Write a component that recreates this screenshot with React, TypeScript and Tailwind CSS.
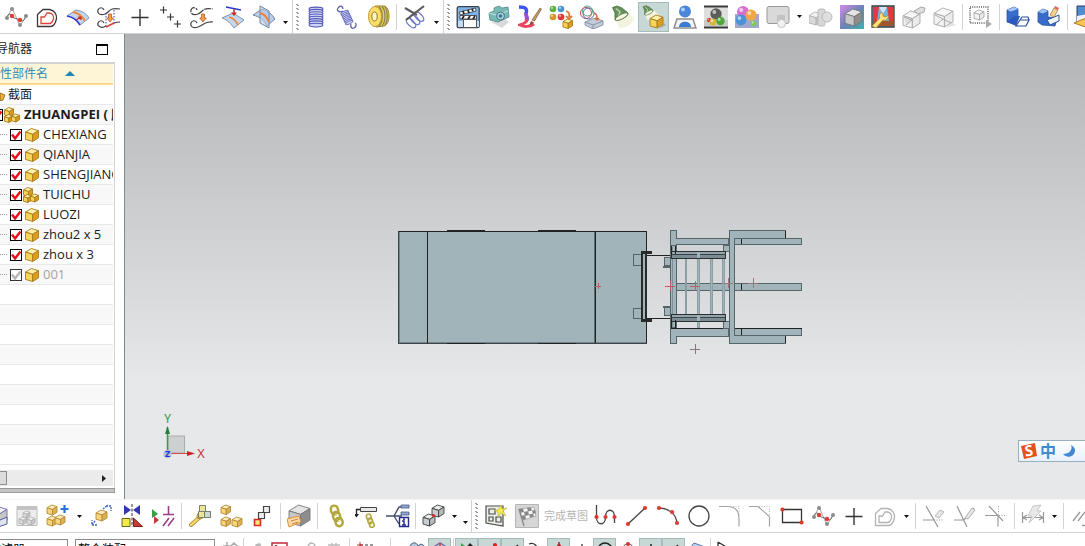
import type { ReactNode } from "react";
import clsx from "clsx";

type Palette = { top: string; left: string; right: string; line: string };

const gold: Palette = { top: "#fdf0a8", left: "#f8d558", right: "#dd9d1d", line: "#a87a1c" };
const amber: Palette = { top: "#fdedb9", left: "#f6d67c", right: "#deb052", line: "#b58a37" };
const grey: Palette = { top: "#f1f1f1", left: "#dadada", right: "#c6c6c6", line: "#b3b3b3" };
const steel: Palette = { top: "#e4e4e4", left: "#c6c6c6", right: "#8d8d8d", line: "#777777" };
const glass: Palette = { top: "#e8eaec", left: "#c9cdd0", right: "#b7bbbe", line: "#3c3c3c" };
const wire: Palette = { top: "#f8f8f8", left: "#f3f3f3", right: "#ebebeb", line: "#a8a8a8" };

function Cube({ x, y, s, p }: { x: number; y: number; s: number; p: Palette }) {
  const h = s * 0.28;
  const m = s * 0.55;
  return (
    <g transform={`translate(${x} ${y})`} stroke={p.line} strokeWidth=".9" strokeLinejoin="round">
      <path d={`M0 ${h} L${s - m} 0 L${s} ${h * 0.6} L${m} ${h * 1.6}Z`} fill={p.top} />
      <path d={`M0 ${h} L${m} ${h * 1.6} V${s} L0 ${s * 0.84}Z`} fill={p.left} />
      <path d={`M${m} ${h * 1.6} L${s} ${h * 0.6} V${s * 0.72} L${m} ${s}Z`} fill={p.right} />
    </g>
  );
}

function Icon({ children }: { children: ReactNode }) {
  return (
    <svg viewBox="0 0 24 24" fill="none" className="size-6 shrink-0" aria-hidden="true">
      {children}
    </svg>
  );
}

function Tool({ label, active, children }: { label: string; active?: boolean; children: ReactNode }) {
  return (
    <button
      type="button"
      aria-label={label}
      className={clsx(
        "flex h-[30px] w-[31px] shrink-0 items-center justify-center border",
        active ? "border-[#a5bcbb] bg-[#c8d8d6]" : "border-transparent",
      )}
    >
      <Icon>{children}</Icon>
    </button>
  );
}

function Caret({ className = "w-3", low }: { className?: string; low?: boolean }) {
  return (
    <button type="button" aria-label="More" className={clsx("flex h-[30px] shrink-0 items-center justify-center", className, low && "pt-3")}>
      <svg viewBox="0 0 5 3" className="h-[3px] w-[5px]" aria-hidden="true">
        <path d="M0 0h5L2.500 3z" fill="#111" />
      </svg>
    </button>
  );
}

function Sep({ className = "w-1.5" }: { className?: string }) {
  return (
    <span className={clsx("flex shrink-0 justify-center", className)}>
      <span className="h-[26px] w-px bg-[#d3d3d3]" />
    </span>
  );
}

function Grip({ className }: { className: string }) {
  return (
    <span className={clsx("flex h-full shrink-0 items-center justify-between border-l border-[#d0d0d0]", className)}>
      <svg viewBox="0 0 4 26" className="ml-[3px] h-[26px] w-1" aria-hidden="true">
        {[0, 4, 8, 12, 16, 20, 24].map((y) => (
          <path key={y} d={`M0 ${y}h2v1h1v1h-2v-1h-1z`} fill="#9d9d9d" />
        ))}
      </svg>
    </span>
  );
}

/* ---------- shared drawings ---------- */

function Spline() {
  return (
    <>
      <path d="M3 13 8 3l8 18 6-10" stroke="#a8a8a8" />
      <path d="M3 13c1-5 3-5 5-2s4 2 8 4 4 0 6-4" stroke="#5d5d5d" />
      {["3 13", "8 4", "16 20", "22 11"].map((p) => (
        <circle key={p} cx={p.split(" ")[0]} cy={p.split(" ")[1]} r="2" fill="#8c8c8c" />
      ))}
      <circle cx="8" cy="11" r="2.200" fill="#df3b2e" />
      <circle cx="16" cy="15" r="2.200" fill="#df3b2e" />
    </>
  );
}

function Contour({ outer, inner }: { outer: string; inner: string }) {
  return (
    <>
      <path d="M2.500 21.500V9.500L8 4.500h6.500c5 1 7.500 5 7 9-1 5-3 8-6 8z" stroke={outer} strokeWidth="1.300" />
      <path d="M6 18.500V12h3.500L12 8h2.500c3 .5 4.500 3 4 6-1 3-2 4.500-4 4.500z" stroke={inner} strokeWidth="1.300" />
    </>
  );
}

function Coil({ n = 8 }: { n?: number }) {
  return (
    <>
      {Array.from({ length: n }, (_, i) => (
        <ellipse key={i} cx="12" cy={4 + i * 2.3} rx="7" ry="1.900" stroke="#4f57b8" strokeWidth="1.100" fill="#cfd4f1" />
      ))}
    </>
  );
}

function Lamp() {
  return (
    <>
      <path d="m5 15 12-7 6 5c0 5-7 10-15 10z" fill="#f3f3e0" />
      <path d="M1.500 2.500 6 1l5 2 6 5c1 3-8 8-13 7L4 8z" fill="#67925a" stroke="#446a39" strokeWidth=".8" />
      <path d="M5 3.500 9 7l-2 5" stroke="#bcd6b0" strokeWidth="1.500" />
      <ellipse cx="10.500" cy="11.700" rx="7" ry="2.300" transform="rotate(-28 10.500 11.700)" fill="#f6f8de" stroke="#56784b" strokeWidth=".8" />
    </>
  );
}

function Chain() {
  return (
    <g stroke="#b2a73c" strokeWidth="2.400">
      <rect x="7" y="1.500" width="7" height="9" rx="3.500" transform="rotate(-15 11 6)" />
      <rect x="9" y="8" width="7" height="9" rx="3.500" transform="rotate(-15 12 12)" />
      <rect x="11.500" y="14" width="7" height="8.500" rx="3.500" transform="rotate(-15 14 18)" />
      <path d="m8 4 3-1M11 11l3-1M14 17l3-1" stroke="#f1eb9b" strokeWidth="1" />
    </g>
  );
}

function Plus() {
  return <path d="M12 4v17M3.500 12.500h17" stroke="#333" strokeWidth="1.400" />;
}

function DownArrow({ x, y }: { x: number; y: number }) {
  return (
    <path transform={`translate(${x} ${y})`} d="M-1.500 0h3v4h1.800L0 8l-3.300-4h1.800z" fill="#f2a23c" stroke="#b3482c" strokeWidth=".7" />
  );
}

function Ball({ cx, cy, r, fill }: { cx: number; cy: number; r: number; fill: string }) {
  return (
    <>
      <circle cx={cx} cy={cy} r={r} fill={fill} />
      <circle cx={cx - r * 0.3} cy={cy - r * 0.35} r={r * 0.35} fill="#fff" opacity=".6" />
    </>
  );
}

function Dots({ points }: { points: [number, number][] }) {
  return (
    <>
      {points.map(([x, y]) => (
        <circle key={`${x}-${y}`} cx={x} cy={y} r="2.100" fill="#dd3a2d" />
      ))}
    </>
  );
}

/* ---------- top toolbar ---------- */

function TopToolbar() {
  return (
    <div role="toolbar" aria-label="Curves and display" className="flex h-[34px] shrink-0 items-center overflow-hidden border-b border-[#cfd2d3] bg-white">
      <Tool label="Studio spline"><Spline /></Tool>
      <Tool label="Offset curve"><Contour outer="#3a3a3a" inner="#dc4438" /></Tool>
      <Tool label="Offset in face">
        <path d="M1 11 10 5c6 1 10 3 13 8l-9 7C11 15 7 12 1 11z" fill="#c3d6ef" stroke="#7d94b5" />
        <path d="M1 11c6 1 10 4 13 9" stroke="#2b36dc" strokeWidth="1.600" />
        <path d="M7 7c6 1 9 4 12 9" stroke="#f08a3c" strokeWidth="2" />
        <path d="m10 15 5-3m-3 0h3v3" stroke="#c22c22" strokeWidth="1.200" />
      </Tool>
      <Tool label="Bridge curve">
        <path d="M8 9C3 11 0 8 1 5s5-3 6 0M8 9c5-2 4-7 15-5M9 21C4 24 0 21 1 18s5-3 6 0M16 19c2-2 4-2 7-2" stroke="#444" strokeWidth="1.200" />
        <path d="M9 22 17 18" stroke="#e33a30" strokeWidth="1.500" />
        <path d="M9 8v13M17 5v13" stroke="#3c3cc8" strokeDasharray="1.500 1.500" />
        <DownArrow x={13} y={9} />
      </Tool>
      <Tool label="Point"><Plus /></Tool>
      <Tool label="Point set">
        <path d="M4.500 1.500v7M1 5h7M11.500 8.500v7M8 12h7M18.500 15.500v7M15 19h7" stroke="#333" strokeWidth="1.200" />
      </Tool>
      <Tool label="Project curve">
        <path d="M8 9C3 11 0 8 1 5s5-3 6 0M8 9c5-2 4-7 15-5" stroke="#444" strokeWidth="1.200" strokeDasharray="7 1" />
        <path d="M8 22C3 24 0 21 1 18s5-3 6 0M8 22c6-2 6-6 15-5" stroke="#444" strokeWidth="1.200" />
        <DownArrow x={13} y={9} />
      </Tool>
      <Tool label="Combined projection">
        <path d="m1 13 11-5c4 2 7 5 11 7l-10 8C10 19 7 15 1 13z" fill="#c5d7ec" stroke="#7f94ae" />
        <path d="m5 2 15 3" stroke="#2b3ad4" strokeWidth="1.600" />
        <path d="M8 12c4 1 7 4 9 8" stroke="#ee8036" strokeWidth="1.600" />
        <path d="M13 4v5" stroke="#c92b27" strokeWidth="1.500" />
        <path d="M10 7.500h6L13 11z" fill="#c92b27" />
      </Tool>
      <Tool label="Intersection curve">
        <path d="m1 10 9-6c6 2 10 5 13 10l-8 7C12 15 8 12 1 10z" fill="#b9cfe9" stroke="#7187a6" />
        <path d="m8 1 9 5v17l-9-5z" fill="#b9cae0" fillOpacity=".6" stroke="#7187a6" />
        <path d="M8 8c4 1 7 4 9 9" stroke="#ee8036" strokeWidth="2" />
      </Tool>
      <Caret className="w-[13px]" low />

      <Grip className="w-2" />
      <Tool label="Cylindrical spring"><Coil /></Tool>
      <Tool label="Tension spring">
        <g transform="rotate(-25 12 12) translate(4.500 4) scale(.6 .7)"><Coil n={8} /></g>
        <path d="M8 6C5 8 1 6 3 3s5-2 5 1M16 19c-1 3 1 5 3 4s3-4 1-5" stroke="#5a5fae" strokeWidth="1.300" />
      </Tool>
      <Tool label="Pulley">
        <path d="M9 1h9c3 0 5 5 5 10s-2 9-5 10l-8 1z" fill="#eccd4d" stroke="#9b812c" />
        <path d="M12.500 1.500c5 4 5 16 0 20M16 1.500c4 4 4 15 0 19.500M19 2c3 4 3 14 0 18" stroke="#80835c" strokeWidth="1.200" />
        <ellipse cx="9" cy="11.500" rx="6.500" ry="10" fill="#f9df68" stroke="#c39a2f" />
        <ellipse cx="8.500" cy="11.500" rx="2.700" ry="4.500" fill="#fff5bd" stroke="#8e7326" />
      </Tool>
      <Sep />
      <Tool label="Delete spring">
        {[0, 4, 8].map((d) => (
          <ellipse key={d} cx={8 + d} cy={18 - d * 0.8} rx="3" ry="6" transform={`rotate(-45 ${8 + d} ${18 - d * 0.8})`} stroke="#6f7acb" strokeWidth="1.400" />
        ))}
        <path d="m2 3 12 7M3 15 21 1" stroke="#5d5d5d" strokeWidth="2.200" />
      </Tool>
      <Caret className="w-[13px]" low />

      <Grip className="w-[9px]" />
      <Tool label="Animation">
        <rect x="1.200" y="1.700" width="22" height="21" rx="1.500" fill="#7fb4e6" stroke="#39424e" strokeWidth="1.300" />
        <path d="M2 16h21v6H2z" fill="#c3dcf4" />
        <path d="m3.500 7 16-4 .5 3L4 10z" fill="#fff" stroke="#333" strokeWidth=".8" />
        <path d="m7 6 1 3m4-4 1 3m3-4 1 2" stroke="#222" strokeWidth="1.800" />
        <path d="M4 10.500h16.500V14H4z" fill="#fff" stroke="#333" strokeWidth=".8" />
        <path d="m6 14 2-3m4 3 2-3m3 3 2-3" stroke="#222" strokeWidth="1.800" />
        <path d="M7.500 14.500h13v8h-13z" fill="#fbfbfb" stroke="#555" />
      </Tool>
      <Tool label="Capture view">
        <path d="m4 17 11 6 7-6-4-3z" fill="#dadada" />
        <path d="m2 8 5-2V3l5-2 3 2 6-1 1 10-11 5-8-2z" fill="#77b9b5" stroke="#4b8683" strokeWidth=".8" />
        <path d="m2 8 7 2 12-4" stroke="#c6e6e3" />
        <circle cx="13.500" cy="11" r="4" fill="#a7d3dd" stroke="#41768a" />
        <circle cx="13.500" cy="11" r="1.800" fill="#3c6e91" />
      </Tool>
      <Tool label="Edit object display">
        <path d="M1 2c9 0 8 4 7 7" stroke="#3e55ee" strokeWidth="3.500" />
        <path d="M8 8c-1 3 3 5 0 8" stroke="#9a4fd0" strokeWidth="4" />
        <path d="M9 14c0 4-4 5-7 6 4 2 10 2 14-1" stroke="#e8455f" strokeWidth="3" />
        <path d="m14 15 8-12 1.500 1-7 12z" fill="#c09a63" stroke="#6b4a23" strokeWidth=".6" />
        <path d="m11 21 2-5 3 1.500z" fill="#8c4a3a" />
      </Tool>
      <Tool label="Show and hide">
        <Ball cx={4} cy={4} r={3.3} fill="#5cb43f" />
        <Ball cx={12} cy={4} r={3.3} fill="#4b96cf" />
        <Ball cx={4} cy={12} r={3.3} fill="#d1952a" />
        <Ball cx={12} cy={12} r={3.3} fill="#dc3a34" />
        <path d="M17 6c3 1 4 3 3 6m-3-1 3 3 3-3" stroke="#dd7936" strokeWidth="1.800" />
        <Cube x={14} y={14} s={9.500} p={gold} />
      </Tool>
      <Tool label="Assign material">
        <path d="m5 17 10-4 8 3v4l-10 4-8-4z" fill="#c4ccd9" stroke="#7b8798" strokeWidth=".8" />
        <path d="m5 17 8 3 10-4M13 20v4" stroke="#7b8798" strokeWidth=".8" />
        <circle cx="6" cy="8" r="5.500" stroke="#d5434a" />
        <circle cx="8.500" cy="8.500" r="5.500" stroke="#4466c0" />
        <circle cx="7.500" cy="6" r="5" stroke="#55a07f" />
        <path d="M14 8c3 1 3 3 3 6m-2-1 2 2 2-2" stroke="#de6a34" strokeWidth="1.500" />
      </Tool>
      <Tool label="Lights"><Lamp /></Tool>
      <Tool label="Scene lights" active>
        <path d="m5 10 7-5 9 9-9 4z" fill="#fbf8cf" opacity=".8" />
        <g transform="translate(0 0) scale(.65)"><Lamp /></g>
        <path d="m17 24 7-4-2-2z" fill="#a3b1ab" />
        <Cube x={8} y={10} s={13} p={gold} />
      </Tool>
      <Tool label="Reflection">
        <circle cx="12" cy="6.500" r="6" fill="#4c86d8" />
        <circle cx="10" cy="4.500" r="2" fill="#acd0fa" />
        <path d="M4 14h16l3 9H1z" fill="#f4f4f4" stroke="#8f8f8f" strokeWidth="1.500" />
        <path d="M6 22c0-7 12-7 12 0z" fill="#3c7bd3" />
      </Tool>
      <Tool label="Advanced studio">
        <path d="M0 1h24v22H0z" fill="#dfe0de" />
        <path d="M0 15h24v6H0z" fill="#c8cac6" />
        <path d="M0 .500h24v2H0zM0 21.500h24v2H0z" fill="#3a3a3a" />
        <Ball cx={12} cy={9} r={5.700} fill="#5c5c5c" />
        <Ball cx={5} cy={15} r={2.200} fill="#c74336" />
        <Ball cx={9} cy={17} r={3.500} fill="#d7b83d" />
        <Ball cx={16.500} cy={16} r={4.200} fill="#4da53b" />
      </Tool>
      <Tool label="Materials">
        <path d="M0 9h24v14H0z" fill="#a3a6cf" />
        <Ball cx={8} cy={7} r={6} fill="#d66fd0" />
        <Ball cx={16} cy={10} r={5.500} fill="#f2a745" />
        <Ball cx={6} cy={15} r={5.400} fill="#4a94d4" />
        <Ball cx={18.500} cy={18.500} r={2.800} fill="#78cf50" />
      </Tool>
      <Tool label="Background">
        <rect x="1" y="1.500" width="22" height="17" rx="2" fill="#d9d9d9" stroke="#999" />
        <path d="M11 10h8v8h-8z" fill="#c3c3c3" />
        <circle cx="15.500" cy="18.500" r="4" fill="#f2f2f2" stroke="#c2c2c2" />
      </Tool>
      <Caret />
      <Tool label="Object groups">
        <Cube x={0} y={7} s={13} p={grey} />
        <rect x="9" y="4" width="7" height="17" rx="2" fill="#d8d8d8" stroke="#bababa" />
        <circle cx="18" cy="12" r="5" fill="#dfdfdf" stroke="#bababa" />
      </Tool>
      <Tool label="True shading">
        <linearGradient id="shade" x1="0" y1="0" x2="1" y2="1">
          <stop offset="0" stopColor="#d58be8" />
          <stop offset=".5" stopColor="#6d82b6" />
          <stop offset="1" stopColor="#41b0ad" />
        </linearGradient>
        <path d="M0 0h24v24H0z" fill="url(#shade)" />
        <Cube x={5} y={4} s={17} p={steel} />
      </Tool>
      <Tool label="Stage settings">
        <path d="M1 1h22v21H1z" fill="#79b0e2" stroke="#3c3c3c" strokeWidth="1.300" />
        <path d="M2 2h6L6 16H2zM22 2h-6l2 14h4z" fill="#e0393e" />
        <path d="m8 2 4 7 4-7z" fill="#cfe4f6" />
        <path d="M2 16h20v5H2z" fill="#a0582a" />
        <path d="m1 21 8-8c-2-3 1-6 3-5v3l3 1 2-2c1 4-2 6-5 5l-7 8z" fill="#fbe27a" stroke="#a88a2c" strokeWidth=".8" />
      </Tool>
      <Tool label="Render view">
        <Cube x={1} y={6} s={17} p={wire} />
        <path d="m2 12 8 3-6 5M12 6l7-4 4 1-1 4-6 2z" stroke="#a9a9a9" fill="#dedede" />
      </Tool>
      <Tool label="Render area">
        <path d="m13 23 10-3-4-3z" fill="#e4e4e4" />
        <Cube x={1} y={3} s={19} p={wire} />
        <path d="m2 10 8 4-7 6m7-6 8 4" stroke="#a9a9a9" />
      </Tool>
      <Sep className="w-[5px]" />
      <Tool label="Region">
        <rect x="1" y="2" width="18" height="16" stroke="#555" strokeDasharray="1 1.200" strokeWidth="1.500" />
        <Cube x={5} y={5} s={10} p={wire} />
        <path d="m17 15 6 4-6 4z" fill="#a9a9a9" />
      </Tool>
      <Sep />
      <Tool label="Extrude">
        <path d="m1 5 7-3 4 2v8l-3 7-8-2z" fill="#3a6ccb" stroke="#2a54a8" strokeWidth=".8" />
        <path d="m1 5 4 1.500L12 4 8 2z" fill="#a4c5f5" />
        <path d="M1 17 8 11h6l-4 10z" fill="#2b5abb" />
        <path d="m10 21 4-6h9l-3 6zM14 15l2-3h6l1 3" fill="#fff" stroke="#2b4f9e" strokeWidth="1.200" />
      </Tool>
      <Tool label="Edit section">
        <path d="M1 7 6 4l5 2v6l9 1-2 8-13-1-4-3z" fill="#386bcb" stroke="#2a54a8" strokeWidth=".8" />
        <path d="m1 7 5-3 5 2-5 2.500z" fill="#9fc0f2" />
        <path d="m10 15 12-5v6l-9 4z" fill="#eef3fc" stroke="#2b4f9e" />
        <path d="m13 10 4-7 4 2-4 7z" fill="#f0d38c" stroke="#9b6b3a" strokeWidth=".7" />
        <path d="m17 3 1-2 4 2-1 2z" fill="#d66" />
      </Tool>
      <Sep />
      <Tool label="Image view">
        <path d="M3 1h20v16H3z" fill="#4d8ed1" stroke="#336" />
        <path d="M3 11 23 7v10H3z" fill="#ecf2f8" />
        <path d="m0 18 12-5 11 5-9 5z" fill="#f7c552" stroke="#b47b1f" />
      </Tool>
    </div>
  );
}

/* ---------- navigator ---------- */

function PartIcon({ assembly }: { assembly?: boolean }) {
  return (
    <svg viewBox="0 0 16 16" className="size-4 shrink-0" aria-hidden="true">
      {assembly ? (
        <>
          <Cube x={0.5} y={0.5} s={9} p={gold} />
          <Cube x={0.5} y={7.5} s={8} p={gold} />
          <Cube x={7.5} y={7} s={8} p={gold} />
        </>
      ) : (
        <Cube x={1.500} y={1.500} s={13} p={gold} />
      )}
    </svg>
  );
}

function Tick({ label, muted }: { label: string; muted?: boolean }) {
  return (
    <label className="relative flex size-3 shrink-0">
      <input
        type="checkbox"
        defaultChecked
        aria-label={label}
        className={clsx("peer size-3 appearance-none border bg-white", muted ? "border-[#333]" : "border-black")}
      />
      <svg viewBox="0 0 12 12" className="pointer-events-none absolute inset-0 hidden size-3 peer-checked:block" aria-hidden="true">
        <path d="m2 5.500 3 4 5.500-7" fill="none" stroke={muted ? "#b5b5b5" : "#e3151b"} strokeWidth="2.400" />
      </svg>
    </label>
  );
}

const parts = [
  { name: "CHEXIANG" },
  { name: "QIANJIA" },
  { name: "SHENGJIANG" },
  { name: "TUICHU", assembly: true },
  { name: "LUOZI" },
  { name: "zhou2 x 5" },
  { name: "zhou x 3" },
  { name: "001", muted: true },
];

const row = "flex h-5 items-center overflow-hidden whitespace-nowrap border-b border-[#e9e9e9] even:bg-[#f8f8f8]";

function Navigator() {
  return (
    <aside className="flex w-[125px] shrink-0 flex-col border-r border-[#7f8a8f] bg-white pr-[9px] text-[#1c1c1c]">
      <header className="flex h-7 shrink-0 items-center justify-between pr-[7px] pt-0.5">
        <h2 className="-ml-1 whitespace-nowrap text-xs">导航器</h2>
        <button type="button" aria-label="Float panel" className="h-[11px] w-3 border border-t-2 border-black" />
      </header>
      <div className="flex min-h-0 flex-1 flex-col overflow-hidden border-r border-t-2 border-[#d3d3d3] pr-px">
        <div className="flex h-[21px] shrink-0 items-center border-b-2 border-[#fbd98b] bg-[#fef5d6] text-xs text-[#2e8cb8]">
          <span className="whitespace-nowrap">性部件名</span>
          <svg viewBox="0 0 10 5" className="ml-[17px] h-[5px] w-[10px]" aria-hidden="true">
            <path d="M0 5 5 0l5 5z" fill="#1f86b8" />
          </svg>
        </div>
        <ul className="min-h-0 flex-1 overflow-hidden text-[13px]">
          <li className={row}>
            <svg viewBox="0 0 6 12" className="h-3 w-1.5 shrink-0" aria-hidden="true">
              <path d="M0 4l5 2-2 5-3 1z" fill="#eab23a" stroke="#8d5a17" strokeWidth=".8" />
            </svg>
            <span className="ml-0.5 text-xs">截面</span>
          </li>
          <li className={row}>
            <span className="-ml-[9px] flex"><Tick label="ZHUANGPEI" /></span>
            <span className="ml-px flex"><PartIcon assembly /></span>
            <span className="ml-1 font-bold">ZHUANGPEI ( 顺序 )</span>
          </li>
          {parts.map((p) => (
            <li key={p.name} className={row}>
              <span className="mr-[3px] w-[7px] shrink-0 border-t border-dotted border-[#9a9a9a]" />
              <Tick label={p.name} muted={p.muted} />
              <span className={clsx("flex", p.assembly ? "ml-px mr-1" : "ml-0.5 mr-[3px]")}>
                <PartIcon assembly={p.assembly} />
              </span>
              <span className={p.muted ? "text-[#a3a3a3]" : undefined}>{p.name}</span>
            </li>
          ))}
          {Array.from({ length: 9 }, (_, i) => (
            <li key={i} className={row} />
          ))}
        </ul>
        <div className="mb-0.5 flex h-4 shrink-0 items-center justify-between bg-[#ebebeb]">
          <span className="h-3.5 w-[7px] border border-l-0 border-[#8e8e8e] bg-[#dcdcdc]" />
          <svg viewBox="0 0 4 7" className="mr-[7px] h-[7px] w-1" aria-hidden="true">
            <path d="M0 0l4 3.500L0 7z" fill="#222" />
          </svg>
        </div>
      </div>
      <div className="mb-1.5 h-[5px] shrink-0 border border-l-0 border-[#999] bg-[#c5c5c5]" />
    </aside>
  );
}

/* ---------- graphics window ---------- */

const crosses: [number, number, number][] = [
  [598, 286, 3],
  [670, 286, 5],
  [695, 286, 5],
  [728, 283, 5],
  [753, 283, 5],
  [695, 349, 5],
];

function Model() {
  return (
    <svg viewBox="396 228 408 128" className="absolute left-[271px] top-[194px] w-[408px]" shapeRendering="crispEdges" role="img" aria-label="Assembly, top view">
      <g fill="#a1b4ba" stroke="#56656a">
        <rect x="398.500" y="231.500" width="248" height="112" stroke="#3c4648" />
        <path d="M399 342.500h247M399.500 232v110" stroke="#72848a" />
        <path d="M446.500 230.500h38M537.500 230.500h38M446.500 343.500h38M537.500 343.500h38" stroke="#222" />
        <path d="M399 231.500h247M427.500 232v111M595.500 232v111M646.500 231v22M646.500 321v22" stroke="#222" />
        <path d="M594.500 232v111" stroke="#5d6c70" />

        <rect x="633.500" y="254.500" width="8" height="11" />
        <rect x="633.500" y="308.500" width="8" height="10" />
        <path d="M647 255.500h23M647 318.500h23" stroke="#222" />

        <rect x="664.500" y="257.500" width="6" height="8" />
        <rect x="664.500" y="307.500" width="6" height="8" />
        <path d="M663 266.500h7M663 306.500h7" stroke="#56656a" strokeWidth="2" />

        <path d="M670.500 230.500h6v8h52v6h-52v2h-6z" />
        <path d="M670.500 343.500v-15h58v8h-52v7z" />
        <path d="M671 328.500h58" stroke="#222" />
        <rect x="670.500" y="245.500" width="6" height="82" />
        <path d="M672.500 247v80" stroke="#7e9096" />
        <path d="M676 283.500h54v7h-54z" />

        <g stroke="#8b9ea4">
          <rect x="685.500" y="258.500" width="1" height="56" />
          <rect x="697.500" y="258.500" width="2" height="69" />
          <rect x="710.500" y="258.500" width="2" height="56" />
          <rect x="722.500" y="258.500" width="2" height="56" />
        </g>
        <rect x="723.500" y="245.500" width="6" height="6" />
        <rect x="723.500" y="321.500" width="6" height="7" />
        <path d="M671.500 251.500h54v7h-54zM671.500 314.500h54v7h-54z" fill="#7b8d92" stroke="#2b3133" />
        <path d="M672 254.500h53M672 317.500h53" stroke="#3b4447" />
        <path d="M672 252.500h53M672 315.500h53M672 253.500h53M672 316.500h53" stroke="#93a5ab" />
        <path d="M697 252h3v6h-3zM697 315h3v6h-3z" stroke="none" />
        <path d="M671.500 246v8M675.500 246v8M671.500 320v8M675.500 320v8" stroke="#222" />

        <path d="M729.500 230.500h56v8h16v6h-67v39h67v7h-67v38h67v7h-16v8h-56z" />
        <path d="M734.500 238.500h51M734.500 335.500h51M734.500 238v98" />
        <path d="M734.500 328.500h67M741.500 239v5M741.500 284v6M741.500 329v6M785.500 231v7M785.500 336v7" stroke="#222" />
        <path d="M730 232h4v110h-4z" stroke="none" />
      </g>
      <path d="M641 251h11v3h-5v65h5v3h-11z" fill="#262b2c" />
      <path d="M643 254h2v65h-2z" fill="#a1b4ba" />
      {crosses.map(([x, y, r]) => (
        <path
          key={`${x}-${y}`}
          d={`M${x - r} ${y + 0.5}H${x + r}M${x + 0.5} ${y - r}V${y + r}`}
          stroke={y > 300 ? "#8b7676" : x > 720 ? "#9b7679" : "#bb5f62"}
        />
      ))}
    </svg>
  );
}

function Triad() {
  return (
    <svg viewBox="0 0 50 50" className="absolute bottom-[37px] left-[35px] size-[50px]" aria-label="Axes" role="img">
      <rect x="8" y="24" width="16.500" height="17" fill="#cdd0d0" stroke="#a9adad" />
      <path d="M7.500 40V15" stroke="#3d9a45" strokeWidth="1.500" />
      <path d="m7.500 14 2.500 8H5z" fill="#23803a" />
      <path d="M9 41.500h22" stroke="#d8494b" strokeWidth="1" />
      <path d="m35 41.500-8 2.500v-5z" fill="#cc2024" />
      <text x="7.500" y="11" textAnchor="middle" fontSize="12" fill="#2e9140">Y</text>
      <text x="41" y="46" textAnchor="middle" fontSize="13" fill="#cb2c30">X</text>
      <circle cx="7.500" cy="42" r="4" fill="#b4bfcd" />
      <text x="7.500" y="45" textAnchor="middle" fontSize="9" fontWeight="bold" fill="#1637e0">Z</text>
    </svg>
  );
}

function ImeBar() {
  return (
    <div className="absolute bottom-[37px] right-0 flex h-[22px] w-[67px] items-center border border-r-0 border-[#9aafc0] bg-linear-to-b from-white to-[#e7f1fa] pl-px">
      <svg viewBox="0 0 18 18" className="size-[18px]" role="img" aria-label="Sogou">
        <path d="m1 4 14-3 2 13-13 3z" fill="#e4511c" />
        <text x="9" y="14" textAnchor="middle" fontSize="15" fontWeight="bold" fill="#fff" transform="rotate(-8 9 9)">S</text>
      </svg>
      <span className="ml-0.5 text-base font-bold leading-5 text-[#3f8ad2]">中</span>
      <svg viewBox="0 0 14 14" className="ml-1.5 size-3.5" aria-hidden="true">
        <path d="M9 1c2 5-2 9-8 9 4 5 12 3 12-4 0-2-2-4-4-5z" fill="#4189d3" />
      </svg>
    </div>
  );
}

/* ---------- bottom toolbars ---------- */

function AssemblyToolbar() {
  return (
    <div role="toolbar" aria-label="Assembly and sketch" className="flex h-[34px] shrink-0 items-center overflow-hidden border-b border-t border-b-[#d2d2d2] border-t-[#f3f4f5] bg-white">
      <span className="-ml-5 flex">
        <Tool label="Find component">
          <Cube x={3} y={2} s={20} p={{ ...grey, line: "#6a6fae" }} />
          <path d="m14 17 9-4v7l-9 3z" fill="#dfe4ee" stroke="#555a9c" />
        </Tool>
      </span>
      <Tool label="Open component">
        <path d="M2 2.500h20v19H2z" fill="#ededed" stroke="#bcbcbc" />
        <path d="M2 2h20v4H2z" fill="#c3c3c3" />
        <Cube x={8} y={7} s={7} p={grey} />
        <Cube x={4} y={13} s={7.500} p={grey} />
        <Cube x={12} y={13} s={8} p={grey} />
      </Tool>
      <Tool label="Add component">
        <Cube x={1} y={1} s={10} p={amber} />
        <Cube x={1} y={12} s={10} p={amber} />
        <Cube x={9} y={11} s={10} p={amber} />
        <path d="M18.500 1v8M14.500 5h8" stroke="#2e6fe0" strokeWidth="2.200" />
      </Tool>
      <Caret className="w-[13px]" />
      <Tool label="Move component">
        <Cube x={6} y={6} s={11} p={amber} />
        <path d="M16 2h5v5M13 5l5-4M7 21H2v-5M5 17l-3 4" stroke="#3c67bd" strokeWidth="1.300" strokeDasharray="2 1" />
      </Tool>
      <Tool label="Mirror assembly">
        <path d="M3 1v10l7-5zM19 1v10l-7-5z" fill="#3639b3" />
        <path d="M11 0v23" stroke="#333" strokeDasharray="3 1.500" />
        <path d="M1 14.500h8v8H1z" fill="#f1e84a" stroke="#6a641d" />
        <path d="M12.500 14v8.500h9z" fill="#cc3a32" stroke="#79221e" />
      </Tool>
      <Tool label="Assembly constraints">
        <path d="M0 5v9l6-4z" fill="#33a043" />
        <path d="M2 12v8l5-4z" fill="#c83636" />
        <path d="M16.500 2v8M11 10.500h11M11 22l6-8M16 22l6-8" stroke="#9d3f87" strokeWidth="1.600" />
      </Tool>
      <Sep className="w-[5px]" />
      <Tool label="Wave link">
        <path d="m3 21 9-8" stroke="#a9852a" strokeWidth="4" strokeLinecap="round" />
        <path d="m3 21 9-8" stroke="#f5d768" strokeWidth="2.400" strokeLinecap="round" />
        <circle cx="12" cy="12" r="3" fill="#f5d768" stroke="#a9852a" />
        <path d="M11.500 1.500h6v6h-6zM10.500 7.500h6v6h-6zM16.500 7.500h6v6h-6z" fill="#e9e69a" stroke="#77836f" />
        <path d="M16.500 7.500h6v6h-6z" fill="#ccd9cf" stroke="#77836f" />
      </Tool>
      <Tool label="Pattern component">
        <Cube x={2} y={1} s={9.500} p={amber} />
        <Cube x={2} y={13} s={9.500} p={amber} />
        <Cube x={13} y={13} s={10} p={amber} />
      </Tool>
      <Tool label="Replace component">
        <path d="M13.500 2.500h6v6h-6zM8.500 8.500h6v6h-6z" fill="#eee" stroke="#444" strokeWidth="1.200" />
        <path d="M4.500 15.500h6v6h-6z" fill="#f3e67a" stroke="#d32c23" strokeWidth="1.600" />
      </Tool>
      <Sep />
      <Tool label="Product interface">
        <Cube x={2} y={1} s={21} p={steel} />
        <path d="m0 15 12-3 2 6-12 5z" fill="#ffd9a3" stroke="#dd9238" />
        <path d="m4 17 7-2m-6 5 6-2" stroke="#c98543" />
      </Tool>
      <Sep />
      <Tool label="Wave geometry linker"><Chain /></Tool>
      <Tool label="Relations browser">
        <path d="M5.500 3.500h16v4h-16z" fill="#e8e8e8" stroke="#444" />
        <path d="M5 5.500H1.500V12" stroke="#222" strokeWidth="1.300" />
        <path d="M-1 10h5l-2.500 3.500z" fill="#222" />
        <g transform="translate(7 9) scale(.65)"><Chain /></g>
      </Tool>
      <Tool label="Interpart information">
        <path d="M0 12h8M8 12l5-9h4M8 12h8M8 12l5 8" stroke="#414c66" strokeWidth="1.400" />
        <path d="M15 1h8v3h-8zM15 8h8v3h-8z" fill="#8fa9d1" stroke="#45577c" strokeWidth=".8" />
        <path d="M13.500 13.500h9v9h-9z" fill="#fff" stroke="#25298b" strokeWidth="1.400" />
        <path d="M16 17h2v4m-2 0h4" stroke="#25298b" strokeWidth="1.400" />
        <circle cx="18" cy="15.300" r="1" fill="#25298b" />
      </Tool>
      <Sep className="w-[5px]" />
      <Tool label="Clearance analysis">
        <Cube x={10} y={1} s={12} p={glass} />
        <Cube x={1} y={10} s={12} p={glass} />
        <circle cx="11.500" cy="11.500" r="1.500" fill="#d22" />
      </Tool>
      <Caret className="w-[10px]" />
      <Caret className="w-3" low />

      <Grip className="w-[9px]" />
      <Tool label="Sketch in task">
        <path d="M2 2h17v20L2 19z" fill="#eceeea" stroke="#4a4f48" strokeWidth="1.200" />
        <path d="M5 5h6v5H5zM5 13h4v4H5zM12 13h5v5h-5z" stroke="#4a4f48" strokeWidth="1.200" />
        <path d="m17 1 1 4 5-1-4 3 3 5-5-3-3 4v-5l-4-2h4z" fill="#f6e84e" stroke="#b9ae39" strokeWidth=".6" />
      </Tool>
      <button type="button" disabled className="flex shrink-0 items-center whitespace-nowrap text-[11px] text-[#b5b5b5]">
        <span className="flex w-[31px] justify-center">
          <Icon>
            <path d="M.5.500h23v23H.5z" fill="#d6d6d6" stroke="#b5b5b5" />
            <path d="m4 5 15-2 2 9-13 4z" fill="#f5f5f5" stroke="#999" strokeWidth=".7" />
            <path d="m4 5 4-.5 1 3.500-4 1zM12 4l4-.5 1 3-4 1zM9 8l4-1 1 4-4 1zM17 6.500l3-.5 1 3-3 1zM6 12l4-1 1 4-3 1zM14 10.500l4-1 1 3-4 1z" fill="#888" />
            <path d="m4 5 5 17" stroke="#888" strokeWidth="1.300" />
          </Icon>
        </span>
        <span className="w-12">完成草图</span>
      </button>
      <Tool label="Profile">
        <path d="M2.500 1v12c0 9 9 9 9 0 0-9 9-9 9 0v6" stroke="#444" strokeWidth="1.300" />
        <Dots points={[[2.500, 13], [11.500, 13], [20.500, 13]]} />
      </Tool>
      <Tool label="Line">
        <path d="M3 20 20 4" stroke="#444" strokeWidth="1.300" />
        <Dots points={[[3, 20], [20, 4]]} />
      </Tool>
      <Tool label="Arc">
        <path d="M3 4c10 0 17 6 18 15" stroke="#444" strokeWidth="1.300" />
        <Dots points={[[3, 4], [16, 8], [21, 19]]} />
      </Tool>
      <Tool label="Circle"><circle cx="12" cy="12" r="10" stroke="#444" strokeWidth="1.300" /></Tool>
      <Tool label="Fillet">
        <path d="M1 2.500h8c8 0 12 4 12 12v8" stroke="#a5a5a5" strokeWidth="1.200" />
        <path d="M10 2.500h11v12" stroke="#bbb" strokeDasharray="1 1.500" />
      </Tool>
      <Tool label="Chamfer">
        <path d="M0 2.500h9l11.500 10v10" stroke="#a5a5a5" strokeWidth="1.200" />
        <path d="M10 2.500h10.500v12" stroke="#bbb" strokeDasharray="1 1.500" />
      </Tool>
      <Tool label="Rectangle">
        <path d="M2.500 5.500h19v13h-19z" stroke="#333" strokeWidth="1.300" />
        <Dots points={[[2.500, 5.500], [21.500, 18.500]]} />
      </Tool>
      <Tool label="Sketch spline"><Spline /></Tool>
      <Tool label="Sketch point"><Plus /></Tool>
      <Tool label="Offset"><Contour outer="#b3b3b3" inner="#b3b3b3" /></Tool>
      <Caret className="w-[13px]" />
      <Sep className="w-[5px]" />
      <Tool label="Quick trim">
        <path d="M4 2l12 21M1 16h11" stroke="#969696" strokeWidth="1.200" />
        <path d="M12 16h10" stroke="#999" strokeDasharray="1 1.500" />
        <path d="m13 12 5-6 4 2-5 6z" fill="#e6e6e6" stroke="#b9b9b9" />
      </Tool>
      <Tool label="Quick extend">
        <path d="M4 2l10 21M1 16h10L21 4" stroke="#969696" strokeWidth="1.200" />
        <path d="m12 14 7-10 3 2-7 9z" fill="#e6e6e6" stroke="#aeaeae" />
      </Tool>
      <Tool label="Make corner">
        <path d="M1 11.500h13v11M5 2l14 15" stroke="#9a9a9a" strokeWidth="1.200" />
        <path d="M14.500 2v9.500H23" stroke="#aaa" strokeDasharray="1 1.500" />
      </Tool>
      <Sep />
      <Tool label="Rapid dimension">
        <path d="M1.500 8v11M22.500 8v11M2 13.500h20M6 11l-4 2.500L6 16M18 11l4 2.500L18 16" stroke="#999" strokeWidth="1.200" />
        <path d="m12 2 8-1-4 6h4L8 19l3-7H7z" fill="#e8e8e8" stroke="#bdbdbd" strokeWidth=".8" />
      </Tool>
      <Caret className="w-[13px]" />
      <Sep className="w-[5px]" />
      <Tool label="Geometric constraints">
        <path d="m3 17 7-9M8 17l7-9M12 21.500h10" stroke="#999" strokeWidth="1.300" />
      </Tool>
    </div>
  );
}

function Snap({ label, active, children }: { label: string; active?: boolean; children: ReactNode }) {
  return (
    <button
      type="button"
      aria-label={label}
      className={clsx("flex size-[23px] shrink-0 justify-center border pt-0.5", active ? "border-[#a5bcbb] bg-[#c8d8d6]" : "border-transparent")}
    >
      <svg viewBox="0 0 18 18" fill="none" className="size-[18px]" aria-hidden="true">{children}</svg>
    </button>
  );
}

function SelectionBar() {
  return (
    <div role="toolbar" aria-label="Selection" className="flex h-[13px] shrink-0 items-start overflow-hidden bg-white pt-[5px]">
      <select aria-label="Type filter" className="-ml-[60px] mr-[7px] mt-px h-[22px] w-32 shrink-0 appearance-none border border-[#8b8b8b] bg-white pl-0 text-xs text-black">
        <option>没有选择过滤器</option>
      </select>
      <select aria-label="Selection scope" className="mr-[3px] mt-px h-[22px] w-[140px] shrink-0 appearance-none border border-[#8b8b8b] bg-white pl-0.5 text-xs text-black">
        <option>整个装配</option>
      </select>
      <Snap label="Reset filters"><path d="M6 1v8M2 5h9M13 2l3 3-3 3-3-3z" stroke="#a9a9a9" strokeWidth="1.500" /></Snap>
      <Sep className="w-1" />
      <Snap label="Up one level"><path d="M5 8 8 3l4-1 2 4z" fill="#b9b9b9" /></Snap>
      <Snap label="Select in box">
        <path d="M1 2h15v14H1z" stroke="#c02b38" strokeWidth="1.500" />
        <path d="M5 8V4m-2 2 2-2 2 2" stroke="#c02b38" />
      </Snap>
      <span className="w-2 shrink-0" />
      <Snap label="Deselect"><path d="M6 7c0-7 8-6 7 0z" stroke="#b5b5b5" strokeWidth="1.500" /></Snap>
      <Snap label="Find in navigator"><path d="M3 4h12M4 7h10M7 2v6M11 2v6" stroke="#bdbdbd" strokeWidth="1.500" /></Snap>
      <Sep className="w-2" />
      <Snap label="Rectangle select">
        <path d="M4 4h14v12H4z" stroke="#333" strokeDasharray="3 2" />
        <path d="M4 1v6M1 4h6" stroke="#c33" />
      </Snap>
      <Sep className="w-[29px]" />
      <Snap label="Highlight faces"><path d="M1 7c2-7 8-6 9-2 2-3 6-2 7 2z" fill="#b6c9df" stroke="#4e5b7c" /></Snap>
      <Snap label="Highlight hidden" active>
        <path d="m1 7 8-5 8 5" stroke="#7b6fb0" strokeWidth="1.500" />
        <path d="M9 2v12" stroke="#d23a3a" strokeWidth="1.500" />
      </Snap>
      <Sep className="w-1" />
      <Snap label="Enable snap" active>
        <path d="M3 2v9l5-5z" fill="#3a9d45" />
        <path d="m8 8 4-5 4 4" stroke="#222" strokeWidth="1.500" />
      </Snap>
      <Snap label="End point" active>
        <path d="M3 13 14 4" stroke="#333" />
        <circle cx="14" cy="4" r="2" fill="#d22" />
      </Snap>
      <Snap label="Mid point" active><path d="m3 14 11-10" stroke="#222" strokeWidth="1.500" /></Snap>
      <Snap label="Control point"><path d="M2 3c5-2 9 2 9 8" stroke="#333" strokeWidth="1.300" /></Snap>
      <Snap label="Intersection" active><path d="M9 1v16M3 12l6-9 6 9" stroke="#b5242e" strokeWidth="1.600" /></Snap>
      <Snap label="Existing point"><path d="M9 3v13M3 9h12" stroke="#333" strokeWidth="1.300" /></Snap>
      <Snap label="Arc centre" active><circle cx="9" cy="9" r="7" stroke="#222" strokeWidth="1.500" /></Snap>
      <Snap label="Quadrant point">
        <circle cx="9" cy="9" r="6" stroke="#444" />
        <circle cx="9" cy="3" r="2" fill="#d33" />
      </Snap>
      <Snap label="Point on curve" active><path d="M9 3v13M2 9h14" stroke="#222" strokeWidth="1.500" /></Snap>
      <Snap label="Point on face" active><path d="M3 15 13 4" stroke="#222" strokeWidth="1.500" /></Snap>
      <Snap label="Bounded grid"><path d="m1 8 5-6 11 4-5 8z" fill="#bcd2ee" stroke="#5377ac" /></Snap>
      <Sep className="w-[5px]" />
      <Snap label="Pick"><path d="M2 1v14l3-4M2 1l10 6H6" stroke="#333" strokeWidth="1.300" /></Snap>
    </div>
  );
}

export default function App() {
  return (
    <div className="flex h-screen flex-col overflow-hidden bg-white font-['Open_Sans','Noto_Sans_CJK_SC',sans-serif]">
      <TopToolbar />
      <div className="flex min-h-0 flex-1">
        <Navigator />
        <main className="relative min-w-0 flex-1 overflow-hidden bg-linear-to-b from-[#b2b3b4] to-[#e6e8ea] to-75%">
          <Model />
          <Triad />
          <ImeBar />
        </main>
      </div>
      <AssemblyToolbar />
      <SelectionBar />
    </div>
  );
}
